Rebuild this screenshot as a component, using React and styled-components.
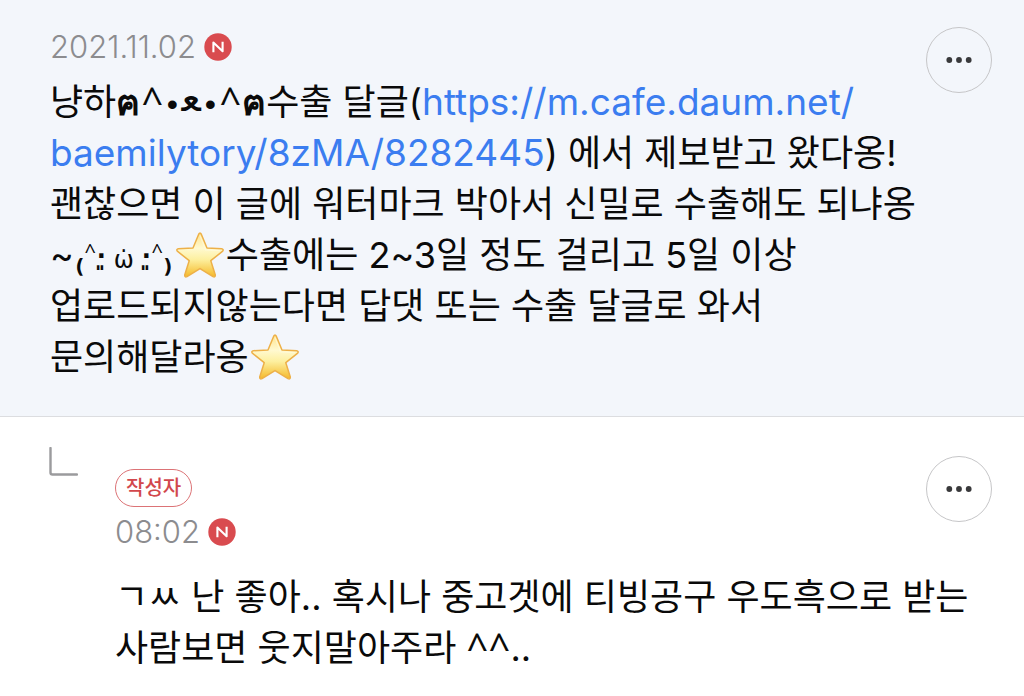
import React from 'react';
import styled, { createGlobalStyle } from 'styled-components';

const GlobalStyle = createGlobalStyle`
    * {
        box-sizing: border-box;
    }

    body {
        margin: 0;
        background: #ffffff;
        color: #0a0a0a;
        font-family: Inter, "Noto Sans CJK KR", "DejaVu Sans", sans-serif;
    }
`;

const List = styled.main`
    display: flex;
    flex-direction: column;
`;

const Comment = styled.article`
    display: flex;
    align-items: flex-start;
    padding: 27px 32px 33px 50px;
    background: #f3f6fb;
    border-bottom: 1px solid #dcdde0;
`;

const Reply = styled.article`
    display: flex;
    align-items: flex-start;
    padding: 30px 32px 20px 49px;
`;

const Content = styled.div`
    flex: 1;
    min-width: 0;
`;

const ReplyHeader = styled.header`
    display: flex;
    align-items: flex-start;
    justify-content: space-between;
    padding-top: 9px;
    margin-bottom: 20px;
`;

const Author = styled.div`
    padding-top: 13px;
`;

const Meta = styled.div`
    display: flex;
    align-items: center;
    gap: 8px;
    height: 40px;
    margin-bottom: 10px;
`;

const ReplyMeta = styled(Meta)`
    margin-top: 5px;
    margin-bottom: 0;
`;

const Time = styled.time`
    color: #8c8c8f;
    font-size: 31px;
    font-weight: 300;
    line-height: 40px;
`;

const NewBadge = styled.svg`
    display: block;
    width: 28px;
    height: 28px;
`;

const AuthorBadge = styled.span`
    display: block;
    width: max-content;
    padding: 1px 10px 0;
    border: 1px solid #dc7376;
    border-radius: 19px;
    color: #d2474c;
    font-size: 20px;
    font-weight: 500;
    line-height: 35px;
`;

const Text = styled.p`
    margin: 0;
    font-size: 36px;
    line-height: 51px;
    word-break: keep-all;
`;

const Link = styled.a`
    color: #3b7df0;
    font-size: 37px;
    line-height: 50px;
    text-decoration: none;
`;

const Kaomoji = styled.span`
    display: inline-block;
    line-height: 30px;
    white-space: nowrap;
`;

const Glyph = styled.span`
    display: inline-flex;
    justify-content: center;
    line-height: 24px;
`;

const Paw = styled(Glyph)`
    width: 24px;
    font-weight: 700;
`;

const Ear = styled(Glyph)`
    width: 24px;
    font-family: "Noto Sans", sans-serif;
    font-size: 38px;
`;

const Caret = styled(Ear)`
    width: 22px;
`;

const Eye = styled(Glyph)`
    width: 16px;
    font-family: "Liberation Sans", sans-serif;
    font-size: 32px;
`;

const Snout = styled(Glyph)`
    width: 22px;
    font-family: "DejaVu Sans", sans-serif;
    font-size: 40px;
    vertical-align: 4px;
`;

const Cheek = styled(Glyph)`
    width: 11px;
`;

const SmallEar = styled(Glyph)`
    width: 11px;
    font-family: "Noto Sans", sans-serif;
    font-size: 20px;
    vertical-align: 10px;
`;

const SmallEye = styled(Glyph)`
    width: 11px;
    font-family: "DejaVu Sans", sans-serif;
    font-size: 24px;
    font-weight: 700;
    vertical-align: 4px;
`;

const Mouth = styled(Glyph)`
    width: 34px;
    font-family: "DejaVu Sans", sans-serif;
    font-size: 24px;
`;

const MenuButton = styled.button`
    display: flex;
    flex: none;
    align-items: center;
    justify-content: center;
    width: 66px;
    height: 66px;
    padding: 0;
    border: 1px solid #c6c6c8;
    border-radius: 50%;
    background: transparent;
    cursor: pointer;
`;

const ReplyMark = styled.svg`
    display: block;
    flex: none;
    width: 29px;
    height: 29px;
    margin-right: 37px;
`;

const StarIcon = styled.svg`
    width: 50px;
    height: 48px;
    margin: 0 1px;
    vertical-align: -11px;
`;

function New() {
    return (
        <NewBadge viewBox="0 0 28 28" role="img" aria-label="N">
            <circle cx="14" cy="14" r="13.7" fill="#d94b4f"/>
            <path d="M9.4 19.2V9.6L18.6 18.2V8.8" fill="none" stroke="#fff" strokeWidth="2.1" strokeLinejoin="round"/>
        </NewBadge>
    );
}

function Star({id}) {
    return (
        <StarIcon viewBox="0 0 50 48" role="img" aria-label="⭐">
            <defs>
                <linearGradient id={id} x1="0" y1="0" x2="0" y2="1">
                    <stop offset="0" stopColor="#ffe38a"/>
                    <stop offset="0.35" stopColor="#fff9d0"/>
                    <stop offset="0.6" stopColor="#fdf0a0"/>
                    <stop offset="1" stopColor="#f5b928"/>
                </linearGradient>
            </defs>
            <path
                d="M23.7 3.2Q25 .8 26.3 3.2L32 17L46.8 17.7Q49.2 18.4 47.4 20.4L35.8 29.7L40.3 44Q40.4 46.6 38 45.6L25 37.6L12 45.6Q9.6 46.6 9.7 44L14.2 29.7L2.6 20.4Q.8 18.4 3.2 17.7L18 17Z"
                fill={`url(#${id})`}
                stroke="#edb048"
                strokeWidth="1.5"
                strokeLinejoin="round"
            />
            <path d="M25 4.5L30.6 18.8L45 19.6" fill="none" stroke="#fffbe0" strokeWidth="1.2" opacity="0.6"/>
        </StarIcon>
    );
}

function Menu() {
    return (
        <MenuButton type="button" aria-label="더보기">
            <svg width="26" height="6" viewBox="0 0 26 6" fill="#39393b">
                <circle cx="3.3" cy="3" r="2.9"/>
                <circle cx="13" cy="3" r="2.9"/>
                <circle cx="22.7" cy="3" r="2.9"/>
            </svg>
        </MenuButton>
    );
}

function App() {
    return (
        <>
            <GlobalStyle/>
            <List>
                <Comment>
                    <Content>
                        <Meta>
                            <Time dateTime="2021-11-02">2021.11.02</Time>
                            <New/>
                        </Meta>
                        <Text>
                            냥하
                            <Kaomoji>
                                <Paw>ฅ</Paw><Ear>^</Ear><Eye>•</Eye><Snout>ﻌ</Snout><Eye>•</Eye><Ear>^</Ear><Paw>ฅ</Paw>
                            </Kaomoji>
                            수출 달글(
                            <Link href="https://m.cafe.daum.net/baemilytory/8zMA/8282445">
                                https://m.cafe.daum.net/<wbr/>baemilytory/8zMA/8282445
                            </Link>
                            ) 에서 제보받고 왔다옹! 괜찮으면 이 글에 워터마크 박아서 신밀로 수출해도 되냐옹
                            {' '}~
                            <Kaomoji>
                                <Cheek>₍</Cheek><SmallEar>^</SmallEar><SmallEye>·͈</SmallEye><Mouth>ω̇</Mouth><SmallEye>·͈</SmallEye><SmallEar>^</SmallEar><Cheek>₎</Cheek>
                            </Kaomoji>
                            <Star id="star-first"/>수출에는 2~3일 정도 걸리고 5일 이상
                            업로드되지않는다면 답댓 또는 수출 달글로 와서 문의해달라옹<Star id="star-last"/>
                        </Text>
                    </Content>
                    <Menu/>
                </Comment>
                <Reply>
                    <ReplyMark viewBox="0 0 29 29" aria-hidden="true">
                        <path d="M1.5 1V25.5Q1.5 27.5 3.5 27.5H28" fill="none" stroke="#9b9b9d" strokeWidth="2.4" strokeLinecap="round"/>
                    </ReplyMark>
                    <Content>
                        <ReplyHeader>
                            <Author>
                                <AuthorBadge>작성자</AuthorBadge>
                                <ReplyMeta>
                                    <Time>08:02</Time>
                                    <New/>
                                </ReplyMeta>
                            </Author>
                            <Menu/>
                        </ReplyHeader>
                        <Text>
                            ㄱㅆ 난 좋아.. 혹시나 중고겟에 티빙공구 우도흑으로 받는 사람보면 웃지말아주라 <Caret>^</Caret><Caret>^</Caret>..
                        </Text>
                    </Content>
                </Reply>
            </List>
        </>
    );
}

export default App;
